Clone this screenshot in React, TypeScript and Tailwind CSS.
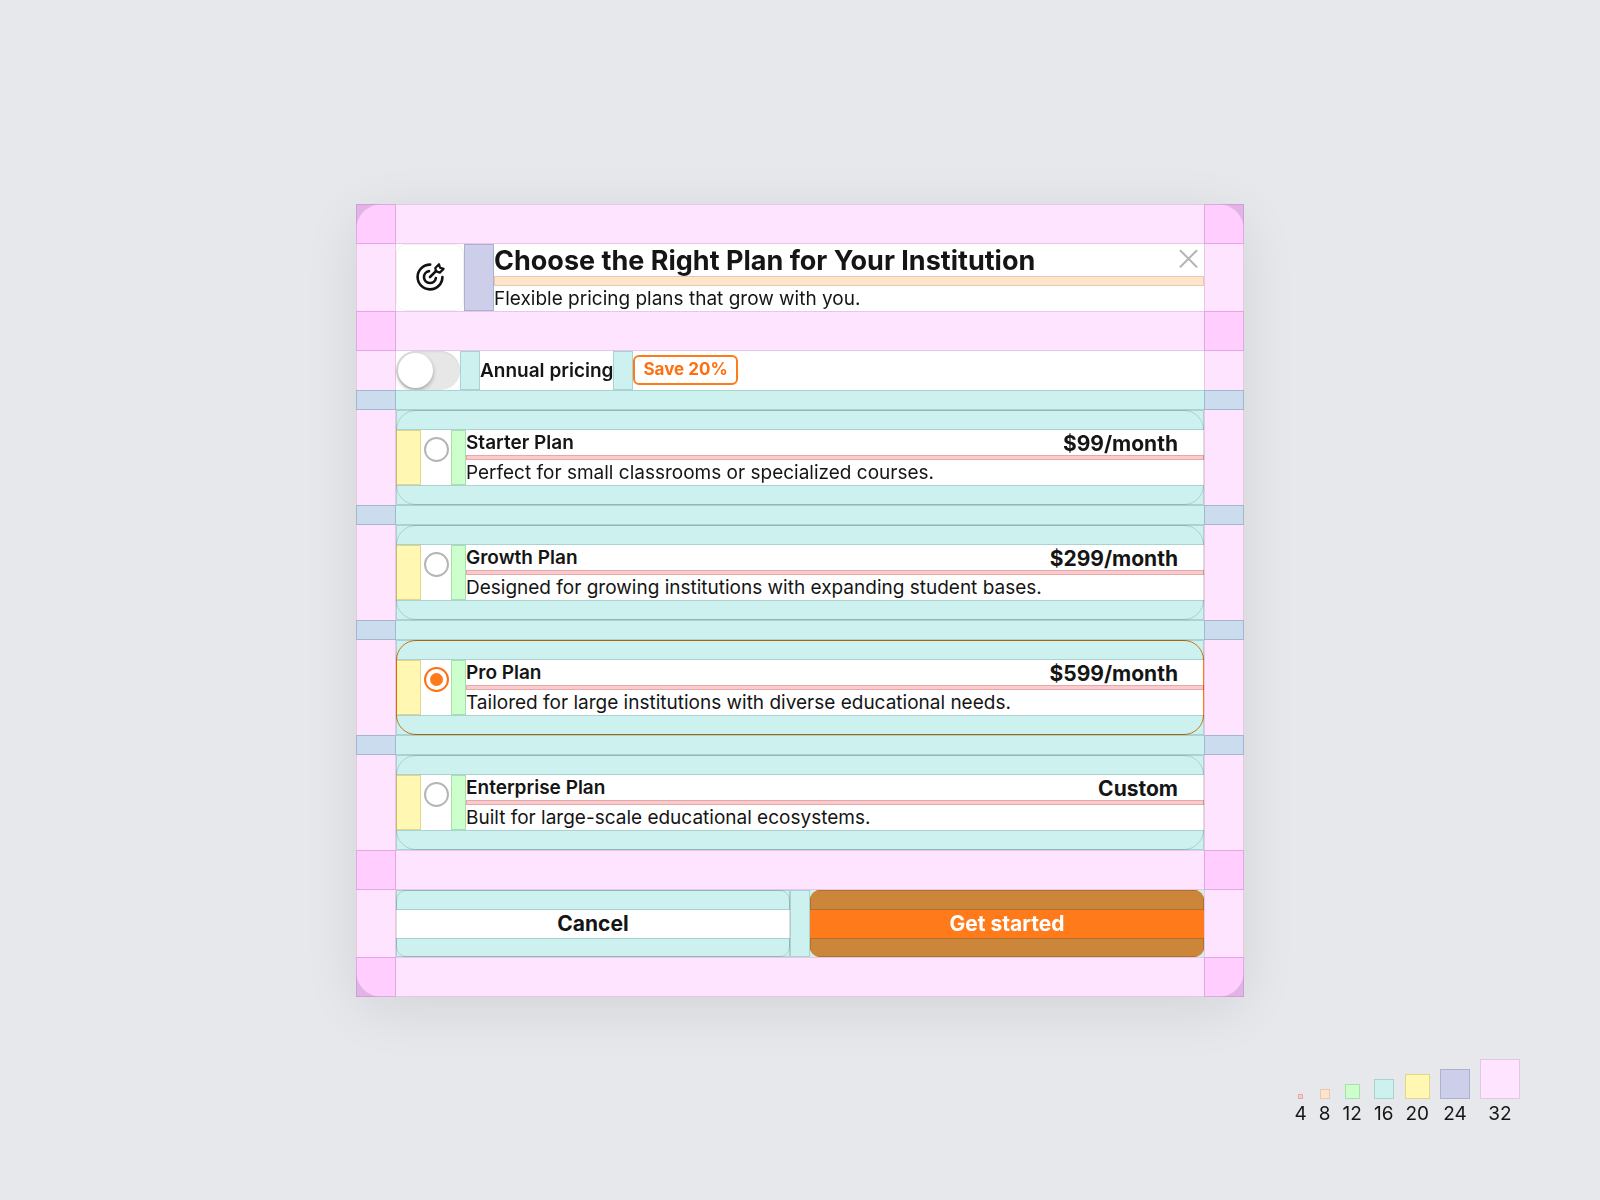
import { useState, type ReactNode } from "react";
import clsx from "clsx";

const plans = [
  { id: "starter", name: "Starter Plan", price: "$99/month", text: "Perfect for small classrooms or specialized courses." },
  { id: "growth", name: "Growth Plan", price: "$299/month", text: "Designed for growing institutions with expanding student bases." },
  { id: "pro", name: "Pro Plan", price: "$599/month", text: "Tailored for large institutions with diverse educational needs." },
  { id: "enterprise", name: "Enterprise Plan", price: "Custom", text: "Built for large-scale educational ecosystems." },
];

const spacings = [
  { value: 4, box: "size-[5px] bg-[#fbcaca] border-[#e6a9ab]" },
  { value: 8, box: "size-[10px] bg-[#ffe4cc] border-[#e6c9b0]" },
  { value: 12, box: "size-[15px] bg-[#ccffcc] border-[#a9dfae]" },
  { value: 16, box: "size-5 bg-[#ccf1ef] border-[#a8d3d2]" },
  { value: 20, box: "size-[25px] bg-[#fff7b2] border-[#e2d68a]" },
  { value: 24, box: "size-[30px] bg-[#cdcee9] border-[#aeb0d0]" },
  { value: 32, box: "size-10 bg-[#ffe4ff] border-[#e3c8e4]" },
];

const teal = "border-[#a8d3d2] bg-[#ccf1ef]";

// A content row with the 32 padding shown on both sides
function Row({ children }: { children: ReactNode }) {
  return (
    <div className="flex">
      <div className="w-10 shrink-0 border-x border-[#e6c8e6] bg-[#ffe4ff]" />
      <div className="min-w-0 flex-1">{children}</div>
      <div className="w-10 shrink-0 border-x border-[#e6c8e6] bg-[#ffe4ff]" />
    </div>
  );
}

function Gap16() {
  return (
    <div className="flex h-5">
      <div className="w-10 shrink-0 border border-[#a4b7d0] bg-[#cbdcee]" />
      <div className={clsx("flex-1 border-y", teal)} />
      <div className="w-10 shrink-0 border border-[#a4b7d0] bg-[#cbdcee]" />
    </div>
  );
}

function Gap32({ left = "", right = "" }: { left?: string; right?: string }) {
  return (
    <div className="flex h-10">
      <div className="relative w-10 shrink-0 bg-[#e0b4e4]">
        <div className={clsx("h-full bg-[#ffceff]", left)} />
        <div className="absolute inset-0 border border-[#c98fce]/60" />
      </div>
      <div className="flex-1 border-y border-[#e6c8e6] bg-[#ffe4ff]" />
      <div className="relative w-10 shrink-0 bg-[#e0b4e4]">
        <div className={clsx("h-full bg-[#ffceff]", right)} />
        <div className="absolute inset-0 border border-[#c98fce]/60" />
      </div>
    </div>
  );
}

function TargetIcon() {
  return (
    <svg width="30" height="30" viewBox="0 0 30 30" fill="none" stroke="#111" strokeWidth="2.6" strokeLinecap="round" strokeLinejoin="round" aria-hidden="true">
      <path d="M15.2 2.6A12.4 12.4 0 1 0 27.4 15" />
      <path d="M14 9.1A6 6 0 1 0 20.9 16" />
      <path d="M15 15l6.2-6.2" />
      <path d="M20.8 9.2l-.5-3.2 3.7-3.8 1.1 3.6 3.5 1.1-3.8 3.7z" strokeWidth="2.2" />
    </svg>
  );
}

export default function App() {
  const [plan, setPlan] = useState("pro");
  const [annual, setAnnual] = useState(false);

  return (
    <div className="grid min-h-screen grid-rows-[1fr_auto_1fr] bg-[#e6e8eb] font-['Inter',sans-serif] text-[#151515]">
      <div />
      <main role="dialog" aria-labelledby="title" className="mx-auto w-full max-w-[888px] rounded-[26px] shadow-[0_12px_56px_rgba(0,0,0,0.09)]">
        <Gap32 left="rounded-tl-[26px]" right="rounded-tr-[26px]" />
        <Row>
          <header className="flex bg-white">
            <div className="flex w-[68px] shrink-0 items-center justify-center rounded-[10px] border border-[#f1f1f1]">
              <TargetIcon />
            </div>
            <div className="w-[30px] shrink-0 border border-[#aeb0d0] bg-[#cdcee9]" />
            <div className="flex-1">
              <div className="flex h-8 items-start justify-between">
                <h1 id="title" className="text-[27px] leading-[34px] font-bold">Choose the Right Plan for Your Institution</h1>
                <button type="button" aria-label="Close">
                  <svg width="32" height="32" viewBox="0 0 32 32" stroke="#b5b5b5" strokeWidth="2" strokeLinecap="round">
                    <path d="M8.5 6.7l16 16M24.5 6.7l-16 16" />
                  </svg>
                </button>
              </div>
              <div className="h-[10px] border border-[#e6c9b0] bg-[#ffe4cc]" />
              <p className="text-[19px] leading-[25px]">Flexible pricing plans that grow with you.</p>
            </div>
          </header>
        </Row>
        <Gap32 />
        <Row>
          <div className="flex h-[39px] items-stretch bg-white">
            <input
              id="annual"
              type="checkbox"
              role="switch"
              checked={annual}
              onChange={(e) => setAnnual(e.target.checked)}
              className="w-16 shrink-0 appearance-none rounded-full bg-[#e7e7e8] p-[2px] shadow-[inset_0_1px_2px_rgba(0,0,0,0.08)] before:block before:size-[35px] before:rounded-full before:bg-white before:shadow-[0_2px_4px_rgba(0,0,0,0.3)] checked:bg-[#ff7a1a] checked:before:ml-auto"
            />
            <div className={clsx("w-5 border", teal)} />
            <label htmlFor="annual" className="text-[19px] leading-[39px] font-semibold">Annual pricing</label>
            <div className={clsx("w-5 border", teal)} />
            <span className="my-auto flex h-[30px] items-center rounded-md border-2 border-[#ff7a1a] px-2 text-[17px] font-bold text-[#ff6f0f]">Save 20%</span>
          </div>
        </Row>
        {plans.map((p) => (
          <div key={p.id}>
            <Gap16 />
            <Row>
              <label className="relative block bg-white">
                <span className={clsx("block h-5 border", teal)} />
                <span className="flex">
                  <span className="w-[25px] shrink-0 border border-[#e2d68a] bg-[#fff7b2]" />
                  <span className="w-[30px] shrink-0 px-[3px] pt-[7px]">
                    <input
                      type="radio"
                      name="plan"
                      value={p.id}
                      checked={plan === p.id}
                      onChange={() => setPlan(p.id)}
                      aria-label={p.name}
                      className="block size-[25px] appearance-none rounded-full border-2 border-[#b5b5b5] p-1 checked:border-[#ff6f0f] checked:before:block checked:before:size-[13px] checked:before:rounded-full checked:before:bg-[#ff7a1a]"
                    />
                  </span>
                  <span className="w-[15px] shrink-0 border border-[#a9dfae] bg-[#ccffcc]" />
                  <span className="flex-1">
                    <span className="flex h-[25px] justify-between pr-[26px]">
                      <span className="text-[19px] leading-[25px] font-semibold">{p.name}</span>
                      <span className="text-[21px] leading-7 font-bold">{p.price}</span>
                    </span>
                    <span className="block h-[5px] border border-[#e6a9ab] bg-[#fbcaca]" />
                    <span className="block text-[19px] leading-[25px]">{p.text}</span>
                  </span>
                </span>
                <span className={clsx("block h-5 border", teal)} />
                <span
                  className={clsx(
                    "pointer-events-none absolute inset-0 rounded-[20px] border mix-blend-multiply",
                    plan === p.id ? "border-[#ff7a0f]" : "border-[#dcdcdc]",
                  )}
                />
              </label>
            </Row>
          </div>
        ))}
        <Gap32 />
        <Row>
          <footer className="flex bg-[#ccf1ef]">
            <button type="button" className="relative flex-1 bg-white text-[21px] leading-7 font-bold">
              <span className={clsx("block h-5 border", teal)} />
              Cancel
              <span className={clsx("block h-[19px] border", teal)} />
              <span className="absolute inset-0 rounded-[10px] border border-[#dcdcdc] mix-blend-multiply" />
            </button>
            <div className={clsx("w-5 border", teal)} />
            <button type="button" className="flex-1 overflow-hidden rounded-[10px] bg-[#ff7a1a] text-[21px] leading-7 font-bold text-white">
              <span className="block h-5 border border-[#b07030] bg-[#cb8639]" />
              Get started
              <span className="block h-[19px] border border-[#b07030] bg-[#cb8639]" />
            </button>
          </footer>
        </Row>
        <Gap32 left="rounded-bl-[26px]" right="rounded-br-[26px]" />
      </main>
      <aside className="flex items-end justify-end gap-[10px] px-20 pb-[74px]">
        {spacings.map((s) => (
          <div key={s.value} className="flex flex-col items-center">
            <div className={clsx("border", s.box)} />
            <span className="mt-[2px] px-px text-[19px] leading-[25px]">{s.value}</span>
          </div>
        ))}
      </aside>
    </div>
  );
}
